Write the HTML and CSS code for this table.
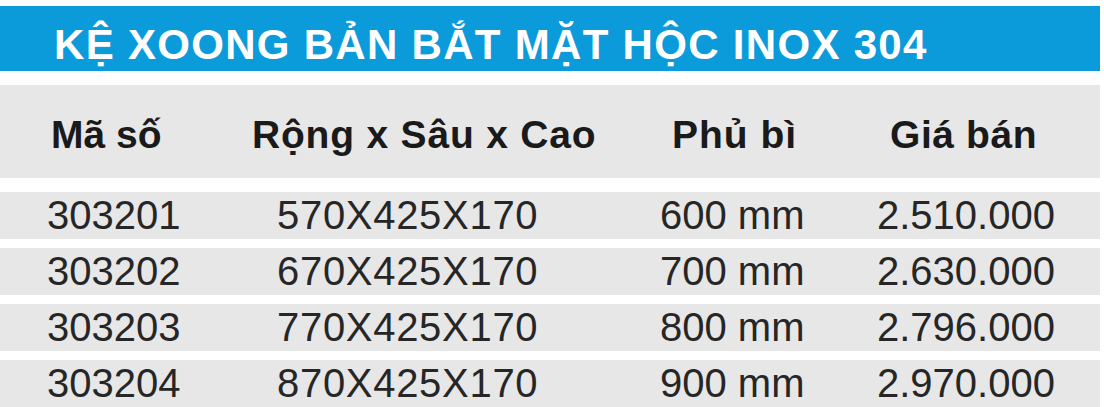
FILE: index.html
```html
<!DOCTYPE html>
<html lang="vi">
<head>
<meta charset="utf-8">
<title>Kệ xoong bản bắt mặt hộc inox 304</title>
<link rel="stylesheet" href="styles.css">
</head>
<body>
<div class="sheet">
  <h1 class="title">KỆ XOONG BẢN BẮT MẶT HỘC INOX 304</h1>
  <div class="row head">
    <div class="c1">Mã số</div>
    <div class="c2">Rộng x Sâu x Cao</div>
    <div class="c3">Phủ bì</div>
    <div class="c4">Giá bán</div>
  </div>
  <div class="row data">
    <div class="c1">303201</div>
    <div class="c2">570X425X170</div>
    <div class="c3">600 mm</div>
    <div class="c4">2.510.000</div>
  </div>
  <div class="row data">
    <div class="c1">303202</div>
    <div class="c2">670X425X170</div>
    <div class="c3">700 mm</div>
    <div class="c4">2.630.000</div>
  </div>
  <div class="row data">
    <div class="c1">303203</div>
    <div class="c2">770X425X170</div>
    <div class="c3">800 mm</div>
    <div class="c4">2.796.000</div>
  </div>
  <div class="row data">
    <div class="c1">303204</div>
    <div class="c2">870X425X170</div>
    <div class="c3">900 mm</div>
    <div class="c4">2.970.000</div>
  </div>
</div>
</body>
</html>
```
FILE: styles.css
```css
html, body {
  margin: 0;
  padding: 0;
  background: #ffffff;
}
body {
  font-family: "Liberation Sans", Arial, sans-serif;
  color: #1e1e1e;
}
.sheet {
  width: 1100px;
  padding-top: 6px;
}
.title {
  margin: 0;
  height: 65px;
  box-sizing: border-box;
  padding: 18px 0 0 54px;
  background: #0c9bda;
  color: #ffffff;
  font-size: 42px;
  line-height: 42px;
  font-weight: bold;
  letter-spacing: 1.3px;
  white-space: nowrap;
}
.row {
  display: grid;
  grid-template-columns: 230px 390px 220px 260px;
  background: #e7e7e7;
  white-space: nowrap;
}
.head {
  margin-top: 14px;
  height: 93px;
  box-sizing: border-box;
  padding-top: 30px;
  font-size: 39px;
  line-height: 39px;
  font-weight: bold;
  color: #1a1a1a;
}
.head .c1 { padding-left: 51px; }
.head .c2 { padding-left: 22px; letter-spacing: 0.8px; }
.head .c3 { padding-left: 52px; letter-spacing: 1px; }
.head .c4 { padding-left: 50px; letter-spacing: 0.6px; }
.data {
  height: 47px;
  font-size: 40px;
  line-height: 46px;
  color: #262626;
}
.head + .data { margin-top: 14px; }
.data + .data { margin-top: 9px; }
.data .c1 { padding-left: 47px; }
.data .c2 { padding-left: 47px; letter-spacing: 0.7px; }
.data .c3 { padding-left: 40px; }
.data .c4 { padding-left: 37px; }
```
